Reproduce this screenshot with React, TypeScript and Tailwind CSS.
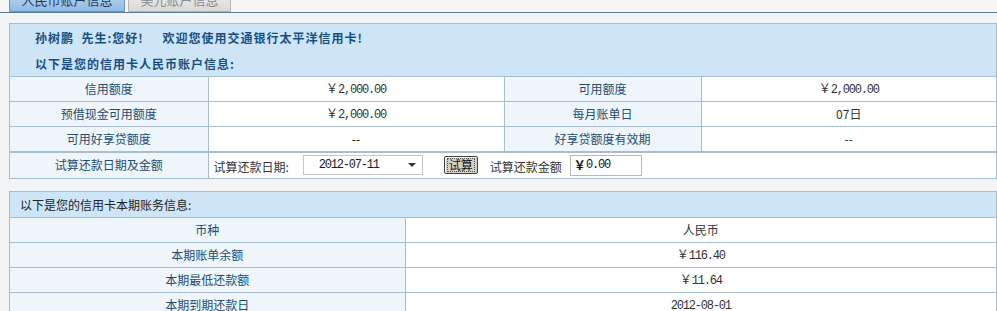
import React from "react";

const cjk = { fontFamily: '"Noto Sans CJK SC", "Liberation Sans", sans-serif' };
const mono = { fontFamily: '"Liberation Mono", "Noto Sans CJK SC", monospace' };

function Money({ v }: { v: string }) {
  return (
    <span className="text-[#333]">
      <span style={cjk}>￥</span>
      <span style={mono} className="tracking-[-1.2px]">
        {v}
      </span>
    </span>
  );
}

const rows1 = [
  ["信用额度", <Money v="2,000.00" />, "可用额度", <Money v="2,000.00" />],
  ["预借现金可用额度", <Money v="2,000.00" />, "每月账单日", "07日"],
  ["可用好享贷额度", "--", "好享贷额度有效期", "--"],
];

const rows2: [string, React.ReactNode][] = [
  ["币种", "人民币"],
  ["本期账单余额", <Money v="116.40" />],
  ["本期最低还款额", <Money v="11.64" />],
  ["本期到期还款日", <span style={mono} className="tracking-[-1.2px]">2012-08-01</span>],
];

export default function App() {
  return (
    <div className="w-[997px] h-[311px] overflow-hidden bg-[#f4f4f4] text-[12px]" style={cjk}>
      {/* 标签页 */}
      <div className="h-[13px] bg-[#f7f5f5] pl-[9px] overflow-hidden flex items-end border-b border-[#5a7d93]">
        <div className="w-[116px] h-[24px] shrink-0 flex items-center justify-center rounded-t bg-gradient-to-b from-[#c3dcf3] to-[#8fbbe5] border border-[#6b94bd] text-[#1e3a56] text-[13px]">
          人民币账户信息
        </div>
        <div className="w-[103px] h-[24px] ml-[3px] shrink-0 flex items-center justify-center rounded-t bg-gradient-to-b from-[#f0f0f0] to-[#d9d9d9] border border-[#b5b5b5] text-[#8a8a8a] text-[13px]">
          美元账户信息
        </div>
      </div>

      <div className="pl-[9px] pt-[10px] bg-[#f3f4f6]">
        {/* 人民币账户信息 */}
        <div className="w-[988px] border border-[#a8bdd0] bg-[#cde5f7]">
          <div className="h-[52px] pl-[25px] pt-[1px] font-bold text-[#174f82] text-[12px] leading-[26px] tracking-[1px]">
            <div>
              孙树鹏&nbsp;&nbsp;先生:您好!&nbsp;&nbsp;&nbsp;&nbsp;&nbsp;欢迎您使用交通银行太平洋信用卡!
            </div>
            <div>以下是您的信用卡人民币账户信息:</div>
          </div>
          <table className="w-full table-fixed border-collapse">
            <colgroup>
              <col className="w-[198px]" />
              <col className="w-[296px]" />
              <col className="w-[197px]" />
              <col />
            </colgroup>
            <tbody>
              {rows1.map((r, i) => (
                <tr key={i} className="h-[25px]">
                  <td className="border-t border-[#a8bdd0] bg-[#eef5fb] text-center text-[#234d70] p-0">{r[0]}</td>
                  <td className="border border-b-0 border-[#a8bdd0] bg-white text-center p-0">{r[1]}</td>
                  <td className="border border-b-0 border-[#a8bdd0] bg-[#eef5fb] text-center text-[#234d70] p-0">{r[2]}</td>
                  <td className="border-t border-[#a8bdd0] bg-white text-center text-[#333] p-0">{r[3]}</td>
                </tr>
              ))}
              <tr className="h-[26px]">
                <td className="border-t-2 border-[#a8bdd0] bg-[#eef5fb] text-center text-[#234d70] p-0">试算还款日期及金额</td>
                <td colSpan={3} className="border-t-2 border-l border-[#a8bdd0] bg-white p-0">
                  <div className="flex items-center pl-[5px] text-[#333]">
                    <span className="pt-[3px]">试算还款日期:</span>
                    <div className="ml-[14px] w-[120px] h-[20px] border border-[#c5c5c5] bg-white flex items-center justify-between pl-[15px] pr-[6px]">
                      <span style={mono} className="tracking-[-1.2px] text-[#222]">2012-07-11</span>
                      <span className="w-0 h-0 border-l-[4px] border-r-[4px] border-t-[4px] border-l-transparent border-r-transparent border-t-[#333]" />
                    </div>
                    <div className="ml-[21px] w-[34px] h-[18px] bg-[#d4d0c8] border border-[#404040] rounded-[2px] flex items-center justify-center shadow-[inset_1px_1px_0_#fff]">
                      <span className="border border-dotted border-[#555] leading-[12px] px-[1px] text-[#111]">试算</span>
                    </div>
                    <span className="ml-[12px] pt-[3px]">试算还款金额</span>
                    <div className="ml-[8px] w-[72px] h-[21px] border border-[#b8b8b8] bg-white flex items-center pl-[3px] text-[#111]">
                      <span className="font-bold">￥</span>
                      <span style={mono} className="tracking-[-1.2px]">0.00</span>
                    </div>
                  </div>
                </td>
              </tr>
            </tbody>
          </table>
        </div>

        {/* 本期账务信息 */}
        <div className="mt-[12px] w-[988px] border border-[#a8bdd0] bg-[#cde5f7]">
          <div className="h-[25px] pl-[10px] leading-[25px] text-[#222]">以下是您的信用卡本期账务信息:</div>
          <table className="w-full table-fixed border-collapse">
            <colgroup>
              <col className="w-[395px]" />
              <col />
            </colgroup>
            <tbody>
              {rows2.map((r, i) => (
                <tr key={i} className="h-[25px]">
                  <td className="border-t border-r border-[#a8bdd0] bg-[#eef5fb] text-center text-[#234d70] p-0">{r[0]}</td>
                  <td className="border-t border-[#a8bdd0] bg-white text-center text-[#333] p-0">{r[1]}</td>
                </tr>
              ))}
            </tbody>
          </table>
        </div>
      </div>
    </div>
  );
}
